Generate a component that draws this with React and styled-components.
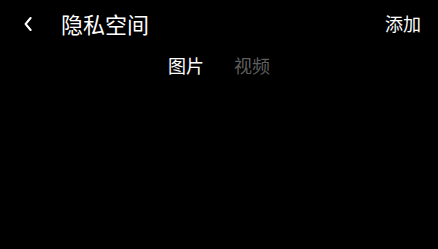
import React from "react";
import styled, { createGlobalStyle } from "styled-components";

const Global = createGlobalStyle`
  html, body { margin: 0; padding: 0; background: #000; }
  body { font-family: "Noto Sans CJK SC", "Noto Sans", sans-serif; color: #fff; }
`;

const Page = styled.div`
  width: 438px;
  height: 249px;
  background: #000;
  display: flex;
  flex-direction: column;
`;

const Header = styled.div`
  display: flex;
  align-items: center;
  height: 46px;
  padding: 0 17px 0 24px;
`;

const BackButton = styled.button`
  background: none;
  border: none;
  padding: 2px 0 0;
  width: 10px;
  height: 16px;
  display: flex;
  align-items: center;
  color: #fff;
  cursor: pointer;
`;

const Title = styled.h1`
  margin: 0 0 0 27px;
  font-size: 22px;
  font-weight: 400;
  line-height: 30px;
  flex: 1;
`;

const Action = styled.span`
  font-size: 18px;
  line-height: 24px;
`;

const Tabs = styled.div`
  display: flex;
  justify-content: center;
  gap: 30px;
  padding-top: 7px;
`;

const Tab = styled.span`
  font-size: 18px;
  line-height: 24px;
  color: ${(p) => (p.$active ? "#fff" : "#5e5e5e")};
`;

export default function App() {
  return (
    <>
      <Global />
      <Page>
        <Header>
          <BackButton aria-label="back">
            <svg width="8" height="14" viewBox="0 0 8 14">
              <path d="M6.6 1 L1.6 7 L6.6 13" fill="none" stroke="#fff" strokeWidth="2" strokeLinecap="round" strokeLinejoin="round" />
            </svg>
          </BackButton>
          <Title>隐私空间</Title>
          <Action>添加</Action>
        </Header>
        <Tabs>
          <Tab $active>图片</Tab>
          <Tab>视频</Tab>
        </Tabs>
      </Page>
    </>
  );
}
